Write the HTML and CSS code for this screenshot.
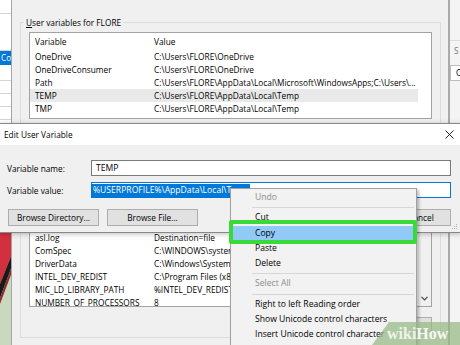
FILE: index.html
```html
<!DOCTYPE html>
<html lang="en">
<head>
    <meta charset="UTF-8">
    <meta name="viewport" content="width=device-width, initial-scale=1.0">
    <title>Edit User Variable</title>
    <link rel="stylesheet" href="styles.css">
</head>
<body>
    <!-- window behind, left edge -->
    <div class="back-left">
        <div class="bl-list">
            <div class="bl-row r1"></div>
            <div class="bl-row r2"></div>
            <div class="bl-row sel">Co</div>
            <div class="bl-row r3"></div>
            <div class="bl-row r4"></div>
            <div class="bl-row r4"></div>
            <div class="bl-row r4"></div>
        </div>
        <svg class="wallpaper" width="12" height="113" viewBox="0 0 12 113">
            <rect width="12" height="113" fill="#c8d9bd"/>
            <polygon points="0,0 12,0 12,22 0,52" fill="#d2303f"/>
            <polygon points="12,22 12,34 0,66 0,52" fill="#1a1a1a"/>
            <polygon points="12,34 12,40 0,72 0,66" fill="#8c2a31"/>
        </svg>
    </div>

    <!-- Environment Variables dialog -->
    <div class="env">
        <fieldset class="group user-group">
            <legend><u>U</u>ser variables for FLORE</legend>
            <div class="listbox user-list">
                <div class="lrow head"><span>Variable</span><span>Value</span></div>
                <div class="lrow"><span>OneDrive</span><span>C:\Users\FLORE\OneDrive</span></div>
                <div class="lrow"><span>OneDriveConsumer</span><span>C:\Users\FLORE\OneDrive</span></div>
                <div class="lrow"><span>Path</span><span>C:\Users\FLORE\AppData\Local\Microsoft\WindowsApps;C:\Users\...</span></div>
                <div class="lrow picked"><span>TEMP</span><span>C:\Users\FLORE\AppData\Local\Temp</span></div>
                <div class="lrow"><span>TMP</span><span>C:\Users\FLORE\AppData\Local\Temp</span></div>
            </div>
            <div class="btn-row">
                <div class="btn small">New...</div>
                <div class="btn small">Edit...</div>
                <div class="btn small">Delete</div>
            </div>
        </fieldset>

        <fieldset class="group sys-group">
            <legend><u>S</u>ystem variables</legend>
            <div class="listbox sys-list">
                <div class="rows">
                    <div class="lrow head"><span>Variable</span><span>Value</span></div>
                    <div class="lrow"><span>ACSvcPort</span><span>17532</span></div>
                    <div class="lrow"><span>asl.log</span><span>Destination=file</span></div>
                    <div class="lrow"><span>ComSpec</span><span>C:\WINDOWS\system32\cmd.exe</span></div>
                    <div class="lrow"><span>DriverData</span><span>C:\Windows\System32\Drivers\DriverData</span></div>
                    <div class="lrow"><span>INTEL_DEV_REDIST</span><span>C:\Program Files (x86)\Common Files\Intel\Shared Libraries\</span></div>
                    <div class="lrow"><span>MIC_LD_LIBRARY_PATH</span><span>%INTEL_DEV_REDIST%compiler\lib\mic</span></div>
                    <div class="lrow last"><span>NUMBER_OF_PROCESSORS</span><span>8</span></div>
                </div>
                <div class="vscroll">
                    <div class="arrow">
                        <svg width="7" height="5" viewBox="0 0 7 5"><polyline points="0.5,0.8 3.5,3.8 6.5,0.8" fill="none" stroke="#444" stroke-width="1.2"/></svg>
                    </div>
                </div>
            </div>
            <div class="btn-row">
                <div class="btn small">New...</div>
                <div class="btn small">Edit...</div>
                <div class="btn small">Delete</div>
            </div>
        </fieldset>
    </div>

    <!-- window behind, right edge -->
    <div class="back-right">
        <div class="br-label">S</div>
        <div class="br-field">C</div>
    </div>

    <!-- Edit User Variable dialog -->
    <div class="edit">
        <div class="edit-title">
            <span>Edit User Variable</span>
            <svg class="close" width="9" height="9" viewBox="0 0 9 9"><path d="M0.5 0.5L8.5 8.5M8.5 0.5L0.5 8.5" stroke="#222" stroke-width="1"/></svg>
        </div>
        <div class="edit-body">
            <div class="field">
                <label>Variable name:</label>
                <div class="input">TEMP</div>
            </div>
            <div class="field">
                <label>Variable value:</label>
                <div class="input focus"><span class="selected">%USERPROFILE%\AppData\Local\Temp</span></div>
            </div>
            <div class="edit-buttons">
                <div class="btn wide">Browse Directory...</div>
                <div class="btn wide">Browse File...</div>
                <div class="btn push">OK</div>
                <div class="btn">Cancel</div>
            </div>
        </div>
        <svg class="grip" width="6" height="6" viewBox="0 0 6 6" fill="#b5b5b5">
            <rect x="4" y="0" width="1" height="1"/><rect x="2" y="2" width="1" height="1"/><rect x="4" y="2" width="1" height="1"/>
            <rect x="0" y="4" width="1" height="1"/><rect x="2" y="4" width="1" height="1"/><rect x="4" y="4" width="1" height="1"/>
        </svg>
    </div>

    <!-- context menu of the edit box -->
    <div class="menu">
        <div class="mi off">Undo</div>
        <div class="sep"></div>
        <div class="mi">Cut</div>
        <div class="mi hot">Copy</div>
        <div class="mi">Paste</div>
        <div class="mi">Delete</div>
        <div class="sep"></div>
        <div class="mi off">Select All</div>
        <div class="sep"></div>
        <div class="mi">Right to left Reading order</div>
        <div class="mi">Show Unicode control characters</div>
        <div class="mi">Insert Unicode control character</div>
    </div>

    <div class="callout"></div>

    <div class="wikihow"><span>wiki</span><b>How</b></div>
</body>
</html>
```

FILE: styles.css
```css
* {
    box-sizing: border-box;
}
body {
    margin: 0;
    width: 460px;
    height: 345px;
    overflow: hidden;
    position: relative;
    background: #f0f0f0;
    font-family: "Segoe UI", "Open Sans", "Noto Sans", sans-serif;
    font-size: 8.3px;
    color: #000;
}
u {
    text-decoration-thickness: 1px;
    text-underline-offset: 1px;
}

/* left window behind */
.back-left {
    position: absolute;
    left: 0;
    top: 0;
    width: 12px;
    height: 345px;
    background: #fff;
    display: flex;
    flex-direction: column;
}
.bl-list {
    height: 232px;
}
.bl-row {
    border-bottom: 1px solid #d4d4d4;
}
.bl-row.r1 { height: 14px; }
.bl-row.r2 { height: 37px; }
.bl-row.sel {
    height: 14px;
    background: #0078d7;
    color: #fff;
    line-height: 13px;
    padding-left: 1px;
    border-bottom: 0;
}
.bl-row.r3 { height: 16px; }
.bl-row.r4 { height: 13px; }
.wallpaper {
    display: block;
    flex: none;
}

/* Environment Variables dialog */
.env {
    position: absolute;
    left: 11px;
    top: 0;
    width: 439px;
    height: 345px;
    overflow: hidden;
    background: #f0f0f0;
    border-left: 1px solid #a5a5a5;
    border-right: 2px solid #aaa;
}
.group {
    margin: 16px 0 0 8px;
    width: 421px;
    min-width: 0;
    border: 1px solid #dcdcdc;
    padding: 3px 8px 7px;
}
.group legend {
    padding: 0 2px;
    margin-left: -5px;
    line-height: 13px;
}
.sys-group {
    margin-top: 10px;
    padding-bottom: 5px;
}
.listbox {
    background: #fff;
    border: 1px solid #a3a3a3;
    overflow: hidden;
}
.user-list {
    height: 87px;
}
.lrow {
    display: grid;
    grid-template-columns: 119px 1fr;
    height: 13px;
    line-height: 13px;
    padding-left: 5px;
    white-space: nowrap;
    overflow: hidden;
}
.lrow.head {
    height: 17px;
    line-height: 17px;
}
.lrow.picked {
    background: #e9e9e9;
    margin-right: 13px;
}
.sys-list {
    height: 130px;
    display: flex;
}
.sys-list .rows {
    flex: 1;
    min-width: 0;
    display: flex;
    flex-direction: column;
    justify-content: flex-end;
    overflow: hidden;
}
.sys-list .lrow {
    flex: none;
}
.sys-list .lrow.last {
    margin-bottom: -3px;
}
.vscroll {
    width: 13px;
    flex: none;
    background: #f0f0f0;
    display: flex;
    flex-direction: column;
    justify-content: flex-end;
}
.arrow {
    height: 15px;
    display: flex;
    align-items: center;
    justify-content: center;
}
.btn-row {
    display: flex;
    justify-content: flex-end;
    gap: 6px;
    margin-top: 7px;
    height: 17px;
}
.sys-group .btn-row {
    margin-top: 10px;
    height: 15px;
}
.btn {
    width: 60px;
    height: 100%;
    background: #e1e1e1;
    border: 1px solid #adadad;
    display: flex;
    align-items: center;
    justify-content: center;
    white-space: nowrap;
}

/* right window behind */
.back-right {
    position: absolute;
    left: 450px;
    top: 0;
    width: 10px;
    height: 345px;
    background: #f4f4f4;
    padding-top: 40px;
    overflow: hidden;
}
.br-label {
    border-top: 1px solid #dcdcdc;
    height: 25px;
    line-height: 20px;
    padding-left: 4px;
    color: #777;
}
.br-field {
    height: 16px;
    background: #fff;
    border: 1px solid #bdbdbd;
    border-right: 0;
    line-height: 14px;
    padding-left: 5px;
}

/* Edit User Variable dialog */
.edit {
    position: absolute;
    left: -1px;
    top: 123px;
    width: 462px;
    height: 110px;
    background: #f0f0f0;
    border: 1px solid #888;
    box-shadow: 0 1px 5px rgba(0, 0, 0, 0.25);
}
.edit-title {
    height: 21px;
    background: #fff;
    display: flex;
    align-items: center;
    justify-content: space-between;
    padding: 0 6px 0 4px;
}
.edit-body {
    padding: 15px 9px 0 7px;
}
.field {
    display: flex;
    align-items: center;
    height: 16px;
    margin-bottom: 6px;
}
.field label {
    width: 84px;
}
.input {
    flex: 1;
    height: 16px;
    background: #fff;
    border: 1px solid #7a7a7a;
    padding-left: 4px;
    line-height: 14px;
    white-space: nowrap;
    overflow: hidden;
    font-size: 8.6px;
}
.input.focus {
    border-color: #0078d7;
    padding-left: 0;
    line-height: 13px;
    padding-top: 1px;
}
.selected {
    display: inline-block;
    background: #0078d7;
    color: #fff;
    padding: 0 1px;
}
.edit-buttons {
    display: flex;
    gap: 8px;
    margin-top: 11px;
    padding-left: 1px;
    height: 17px;
}
.btn.wide {
    width: 91px;
}
.btn.push {
    margin-left: auto;
}
.grip {
    position: absolute;
    right: 2px;
    bottom: 2px;
}

/* context menu */
.menu {
    position: absolute;
    left: 230px;
    top: 188px;
    width: 187px;
    height: 157px;
    overflow: hidden;
    background: #f2f2f2;
    border: 1px solid #a0a0a0;
    border-bottom: 0;
    padding: 1px 2px 0;
    font-size: 8.6px;
    box-shadow: 2px 2px 3px rgba(0, 0, 0, 0.28);
}
.mi {
    height: 15.3px;
    line-height: 15.3px;
    padding-left: 22px;
    white-space: nowrap;
}
.mi.off {
    color: #8d8d8d;
}
.mi.hot {
    background: #91c9f7;
}
.sep {
    height: 1px;
    margin: 2px 0 2px 19px;
    background: #d7d7d7;
}

/* tutorial annotation */
.callout {
    position: absolute;
    left: 229px;
    top: 220px;
    width: 188px;
    height: 24px;
    border: 4px solid #3ad93a;
    border-radius: 2px;
}
.wikihow {
    position: absolute;
    left: 372px;
    top: 322px;
    width: 88px;
    height: 23px;
    background: rgba(150, 185, 130, 0.72);
    clip-path: polygon(17px 0, 100% 0, 100% 100%, 0 100%);
    padding-left: 15px;
    font-family: "Liberation Serif", serif;
    font-size: 16px;
    line-height: 24px;
    white-space: nowrap;
    overflow: hidden;
    color: rgba(255, 255, 255, 0.9);
}
.wikihow span {
    font-weight: bold;
    opacity: 0.9;
}
```
